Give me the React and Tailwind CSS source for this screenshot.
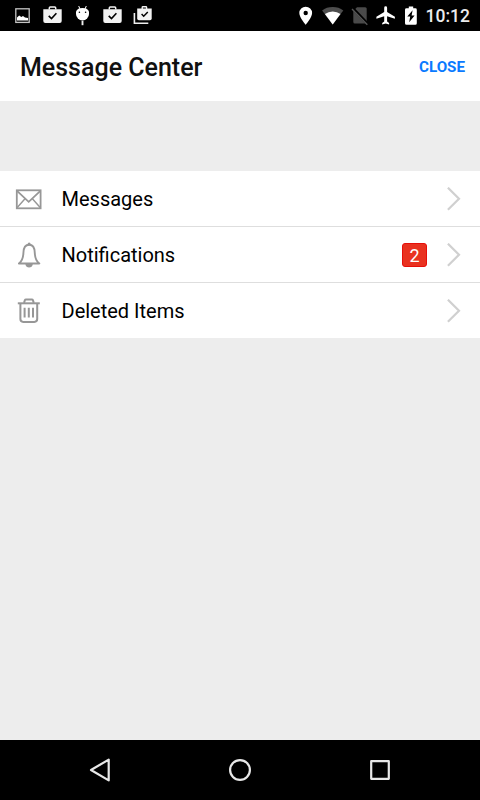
const ITEMS = [
  { label: 'Messages', icon: EnvelopeIcon },
  { label: 'Notifications', icon: BellIcon, count: 2 },
  { label: 'Deleted Items', icon: TrashIcon },
];

function EnvelopeIcon() {
  return (
    <svg className="w-[28px] h-[28px]" viewBox="0 0 28 28" fill="none" stroke="#979797" strokeWidth="1.8">
      <rect x="1.8" y="5.3" width="23.8" height="18" />
      <path d="M2 5.8 L13.7 16.8 L25.4 5.8" />
      <path d="M2 22.8 L10 13.7 M25.4 22.8 L17.4 13.7" strokeWidth="1.4" />
    </svg>
  );
}

function BellIcon() {
  return (
    <svg className="w-[28px] h-[28px]" viewBox="0 0 28 28" fill="none" stroke="#979797" strokeWidth="1.9" strokeLinejoin="round">
      <path d="M3.9 22.5 C7.3 20 8.2 17.3 8.4 12 C8.5 6.4 10.4 3.8 14.1 3.8 C17.8 3.8 19.7 6.4 19.8 12 C20 17.3 20.9 20 24.3 22.5 Z" />
      <circle cx="14.1" cy="2.9" r="1.5" fill="#979797" stroke="none" />
      <path d="M10.4 23 H17.8 C17.6 27.8 10.6 27.8 10.4 23 Z" fill="#979797" stroke="none" />
    </svg>
  );
}

function TrashIcon() {
  return (
    <svg className="w-[28px] h-[28px]" viewBox="0 0 28 28" fill="none" stroke="#979797" strokeWidth="2">
      <path d="M2.8 6.3 H24.8" />
      <path d="M9 5.9 L9.9 3.2 Q10.2 2.4 11 2.4 H16.8 Q17.6 2.4 17.9 3.2 L18.8 5.9" />
      <path d="M5.4 6.5 V22.1 Q5.4 24.9 8.2 24.9 H19.4 Q22.2 24.9 22.2 22.1 V6.5" />
      <path d="M9.6 10.7 V20.5 M13.8 10.7 V20.5 M18 10.7 V20.5" />
    </svg>
  );
}

function Chevron() {
  return (
    <svg className="w-[14px] h-[24px]" viewBox="0 0 14 24" fill="none" stroke="#d0d0d0" strokeWidth="2.2">
      <path d="M0.9 0.7 L12 11.7 L0.9 22.7" />
    </svg>
  );
}

function ImageNotice() {
  return (
    <svg className="w-[30px] h-[31px]" viewBox="0 0 30 31">
      <rect x="8.8" y="8.8" width="13.4" height="13.6" fill="none" stroke="#c4c4c4" strokeWidth="1.3" />
      <path d="M10 20.5 V17.5 L12.2 15.5 L14.3 17 L16 16 L18 17.5 L21 18 V20.5 Z" fill="#fff" />
    </svg>
  );
}

function BagNotice() {
  return (
    <svg className="w-[30px] h-[31px]" viewBox="0 0 30 31">
      <path d="M12.3 9.5 V7.9 Q12.3 6.9 13.3 6.9 H17.7 Q18.7 6.9 18.7 7.9 V9.5" fill="none" stroke="#f2f2f2" strokeWidth="1.5" />
      <path d="M6.3 9.2 H24.7 V21 Q24.7 23 22.7 23 H8.3 Q6.3 23 6.3 21 Z" fill="#f2f2f2" />
      <path d="M11.7 15.8 L14.5 18.5 L19.4 13.3" fill="none" stroke="#000" strokeWidth="1.6" />
    </svg>
  );
}

function DroidNotice() {
  return (
    <svg className="w-[30px] h-[31px]" viewBox="0 0 30 31">
      <path d="M11.7 6 L13 9 M19.3 6 L18 9" stroke="#fff" strokeWidth="1" />
      <path d="M9 11.4 Q10.5 8 15.5 8 Q20.5 8 22 11.4 V14 A6.5 6.4 0 0 1 9 14 Z" fill="#fff" />
      <circle cx="12.4" cy="12.3" r="0.8" fill="#000" />
      <circle cx="18.6" cy="12.3" r="0.8" fill="#000" />
      <path d="M15.5 20.8 V25.2" stroke="#eee" strokeWidth="1.9" />
    </svg>
  );
}

function BagsNotice() {
  return (
    <svg className="w-[30px] h-[31px]" viewBox="0 0 30 31">
      <path d="M7.4 13 V23.2 H21.3" fill="none" stroke="#eee" strokeWidth="1.6" />
      <path d="M15.2 9 V7.5 Q15.2 6.8 15.9 6.8 H18.9 Q19.6 6.8 19.6 7.5 V9" fill="none" stroke="#f2f2f2" strokeWidth="1.4" />
      <path d="M10.2 8.6 H24.7 V18.5 Q24.7 20.2 23 20.2 H11.9 Q10.2 20.2 10.2 18.5 Z" fill="#f2f2f2" />
      <path d="M14.6 14 L16.7 16.2 L20.8 12" fill="none" stroke="#000" strokeWidth="1.5" />
    </svg>
  );
}

function StatusBar() {
  return (
    <div className="h-[31px] bg-black flex justify-between shrink-0">
      <div className="flex pl-[7px]">
        <ImageNotice />
        <BagNotice />
        <DroidNotice />
        <BagNotice />
        <BagsNotice />
      </div>
      <div className="flex pr-[10px]">
        {/* location */}
        <svg className="w-[26px] h-[31px]" viewBox="0 0 26 31">
          <path fillRule="evenodd" d="M12.7 6.7 A6.4 6.4 0 0 1 19.1 13.1 C19.1 17.5 12.7 24.8 12.7 24.8 C12.7 24.8 6.3 17.5 6.3 13.1 A6.4 6.4 0 0 1 12.7 6.7 Z M12.7 10.8 A2.2 2.2 0 1 0 12.7 15.2 A2.2 2.2 0 1 0 12.7 10.8 Z" fill="#fff" />
        </svg>
        {/* wifi */}
        <svg className="w-[27px] h-[31px]" viewBox="0 0 27 31">
          <path d="M3.1 10.4 Q7.5 7 13.7 7 Q19.9 7 24.3 10.4 L13.7 24.6 Z" fill="#4d4d4d" />
          <path d="M5.9 14.1 Q9.3 11.5 13.7 11.5 Q18.1 11.5 21.5 14.1 L13.7 24.6 Z" fill="#fff" />
        </svg>
        {/* no sim */}
        <svg className="w-[26px] h-[31px]" viewBox="0 0 26 31">
          <path d="M11 7.3 H19.2 Q20.7 7.3 20.7 8.8 V22 Q20.7 23.5 19.2 23.5 H8.8 Q7.3 23.5 7.3 22 V11 Z" fill="#4a4a4a" />
          <path d="M6.7 8.3 L22.2 24.5" stroke="#000" strokeWidth="3" />
          <path d="M6 9 L21.3 24.7" stroke="#555" strokeWidth="1.4" />
        </svg>
        {/* airplane */}
        <svg className="w-[26px] h-[31px]" viewBox="0 0 26 31">
          <path d="M22.9 18.7 V16.8 L15.1 12 V7.8 A1.4 1.4 0 0 0 12.2 7.8 V12 L4.4 16.8 V18.7 L12.2 16.3 V21.5 L10.2 23 V24.5 L13.65 23.5 L17.1 24.5 V23 L15.1 21.5 V16.3 Z" fill="#fff" />
        </svg>
        {/* battery */}
        <svg className="w-[26px] h-[31px]" viewBox="0 0 26 31">
          <path d="M10.8 6.6 H15.2 V8.3 H17.3 Q18.8 8.3 18.8 9.7 V23.2 Q18.8 24.7 17.3 24.7 H8.5 Q7 24.7 7 23.2 V9.7 Q7 8.3 8.5 8.3 H10.8 Z" fill="#fff" />
          <path d="M14.6 10.2 L9.3 16.6 H12.2 L11.2 22.2 L16.6 15.5 H13.6 Z" fill="#000" />
        </svg>
        <span className="w-[46px] text-right whitespace-nowrap text-[17.5px] leading-[33px] font-medium text-[#ececec]">10:12</span>
      </div>
    </div>
  );
}

function MenuRow({ label, icon: Icon, count }) {
  return (
    <button className="w-full h-[56px] last:h-[54.5px] flex items-center bg-white text-left pt-px pl-[15px] pr-[19.5px] border-b border-[#dedede] last:border-b-0">
      <Icon />
      <span className="flex-1 ml-[18.5px] text-[20px] leading-[28px] text-black">{label}</span>
      {count && (
        <span className="w-[25px] h-[24px] mb-px mr-[19.5px] rounded-[3px] border border-[#e60f0a] bg-[#e93220] text-white text-[18px] leading-[24px] text-center">
          {count}
        </span>
      )}
      <Chevron />
    </button>
  );
}

export default function App() {
  return (
    <div className="w-[480px] h-[800px] flex flex-col overflow-hidden bg-[#ededed] font-['Roboto',sans-serif]">
      <StatusBar />
      <header className="h-[70px] shrink-0 bg-white flex items-center justify-between pl-[20px] pr-[15px]">
        <h1 className="text-[25px] leading-[32px] font-medium text-[#111] mt-[4px]">Message Center</h1>
        <button className="text-[15.2px] leading-[20px] font-bold text-[#0a7aff] mt-[1px]">CLOSE</button>
      </header>

      <main className="flex-1 pt-[70px]">
        {ITEMS.map((item) => (
          <MenuRow key={item.label} {...item} />
        ))}
      </main>

      <nav className="h-[60px] shrink-0 bg-black flex items-center justify-between px-[88px]">
        <svg className="w-[24px] h-[24px]" viewBox="0 0 24 24" fill="none" stroke="#e8e8e8" strokeWidth="2.2" strokeLinejoin="round">
          <path d="M20.7 1.6 V22.4 L3 12 Z" />
        </svg>
        <svg className="w-[24px] h-[24px]" viewBox="0 0 24 24" fill="none" stroke="#e8e8e8" strokeWidth="2.2">
          <circle cx="12" cy="12" r="9.9" />
        </svg>
        <svg className="w-[24px] h-[24px]" viewBox="0 0 24 24" fill="none" stroke="#e8e8e8" strokeWidth="2.2" strokeLinejoin="round">
          <rect x="3.2" y="3.2" width="17.6" height="17.6" />
        </svg>
      </nav>
    </div>
  );
}
